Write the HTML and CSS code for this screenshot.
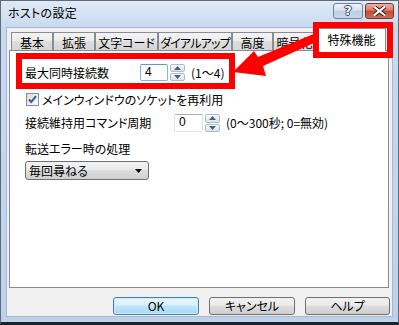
FILE: index.html
```html
<!DOCTYPE html>
<html lang="ja">
<head>
<meta charset="utf-8">
<title>ホストの設定</title>
<link rel="stylesheet" href="styles.css">
</head>
<body>
<div class="window">
  <div class="titlebar">
    <span class="title">ホストの設定</span>
    <div class="caption-btns">
      <div class="cbtn help"><span class="q">?</span></div>
      <div class="cbtn close">
        <svg width="13" height="10" viewBox="0 0 13 10"><path d="M1.5 1 L11.5 9 M11.5 1 L1.5 9" stroke="#3a1410" stroke-width="4" stroke-linecap="square"/><path d="M1.5 1 L11.5 9 M11.5 1 L1.5 9" stroke="#fff" stroke-width="2.2" stroke-linecap="square"/></svg>
      </div>
    </div>
  </div>
  <div class="client">
    <div class="tabs">
      <div class="tab w42">基本</div>
      <div class="tab w42">拡張</div>
      <div class="tab w63">文字コード</div>
      <div class="tab w74">ダイアルアップ</div>
      <div class="tab w41">高度</div>
      <div class="tab w43">暗号化</div>
      <div class="tab sel">特殊機能</div>
    </div>
    <div class="panel">
      <div class="row r1">
        <span class="lbl l1">最大同時接続数</span>
        <div class="edit e1 focus">4</div>
        <div class="spin">
          <div class="sb"><svg width="7" height="4" viewBox="0 0 7 4"><path d="M0 4 L3.5 0 L7 4Z" fill="#4c5f82"/></svg></div>
          <div class="sb"><svg width="7" height="4" viewBox="0 0 7 4"><path d="M0 0 L3.5 4 L7 0Z" fill="#4c5f82"/></svg></div>
        </div>
        <span class="hint">(1～4)</span>
      </div>
      <div class="row chk">
        <span class="box"><svg width="11" height="11" viewBox="0 0 11 11"><path d="M2 5.5 L4.3 8 L9 2.2" fill="none" stroke="#3d5a94" stroke-width="2"/></svg></span>
        <span class="chklbl">メインウィンドウのソケットを再利用</span>
      </div>
      <div class="row r3">
        <span class="lbl l3">接続維持用コマンド周期</span>
        <div class="edit e2">0</div>
        <div class="spin">
          <div class="sb"><svg width="7" height="4" viewBox="0 0 7 4"><path d="M0 4 L3.5 0 L7 4Z" fill="#4c5f82"/></svg></div>
          <div class="sb"><svg width="7" height="4" viewBox="0 0 7 4"><path d="M0 0 L3.5 4 L7 0Z" fill="#4c5f82"/></svg></div>
        </div>
        <span class="hint h3">(0～300秒; 0=無効)</span>
      </div>
      <div class="lbl4">転送エラー時の処理</div>
      <div class="combo">
        <span>毎回尋ねる</span>
        <svg width="7" height="4" viewBox="0 0 7 4"><path d="M0 0 L3.5 4 L7 0Z" fill="#000"/></svg>
      </div>
    </div>
    <div class="buttons">
      <div class="btn def">OK</div>
      <div class="btn">キャンセル</div>
      <div class="btn">ヘルプ</div>
    </div>
  </div>
  <svg class="annot" width="399" height="325" viewBox="0 0 399 325">
    <rect x="19" y="56" width="213" height="30" fill="none" stroke="#ff0000" stroke-width="6"/>
    <rect x="316" y="25" width="74" height="30" fill="none" stroke="#ff0000" stroke-width="6"/>
    <polygon points="233,72 254,51 258,57 316,33 316,42 263,66 266,76" fill="#ff0000"/>
  </svg>
</div>
</body>
</html>
```

FILE: styles.css
```css
* { box-sizing: border-box; }
html, body { margin: 0; padding: 0; }
body {
  width: 399px;
  height: 325px;
  overflow: hidden;
  font-family: "Noto Sans CJK JP", "Noto Sans", sans-serif;
  font-size: 12px;
  color: #000;
  font-feature-settings: "palt";
  background: #fff;
}
.window {
  position: relative;
  width: 399px;
  height: 325px;
  border: 1px solid #5d6b7c;
  border-bottom: 3px solid #1e2228;
  background: linear-gradient(to bottom, #e0eaf6 0, #c9daef 26px, #bdd2ea 100%);
  display: flex;
  flex-direction: column;
}
.titlebar {
  height: 26px;
  display: flex;
  align-items: flex-start;
  padding-left: 7px;
  padding-right: 4px;
}
.title {
  line-height: 16px;
  margin-top: 4px;
  font-size: 12px;
  letter-spacing: 0.3px;
}
.caption-btns {
  margin-left: auto;
  margin-top: 2px;
  display: flex;
  gap: 2px;
}
.cbtn {
  height: 16px;
  border-radius: 3px;
  display: flex;
  align-items: center;
  justify-content: center;
}
.help {
  width: 30px;
  border: 1px solid #6f849f;
  background: linear-gradient(to bottom, #eef3fa 0, #d6e2f0 45%, #bccfe6 50%, #c8d8ec 100%);
}
.q {
  font-family: "DejaVu Sans", sans-serif;
  font-weight: bold;
  font-size: 13px;
  line-height: 14px;
  color: #fff;
  text-shadow: -1px 0 #34455e, 1px 0 #34455e, 0 -1px #34455e, 0 1px #34455e;
}
.close {
  width: 29px;
  border: 1px solid #7d3329;
  background: linear-gradient(to bottom, #eab3a7 0, #d87a68 45%, #c54b36 50%, #d06a55 100%);
}
.client {
  flex: 1;
  margin: 0 5px 5px 5px;
  background: #f0f0f0;
  border: 1px solid #a6b9d1;
  display: flex;
  flex-direction: column;
}
.tabs {
  height: 22px;
  display: flex;
  align-items: flex-end;
  padding-left: 4px;
  position: relative;
  z-index: 2;
}
.tab {
  height: 18px;
  border: 1px solid #898c95;
  border-bottom: none;
  background: linear-gradient(to bottom, #f4f4f4 0, #ececec 45%, #dedede 50%, #d6d6d6 100%);
  text-align: center;
  line-height: 16px;
  padding-top: 2px;
  white-space: nowrap;
  overflow: hidden;
}
.w41 { width: 41px; }
.w42 { width: 42px; }
.w43 { width: 43px; }
.w63 { width: 63px; }
.w74 { width: 74px; letter-spacing: -0.8px; }
.tab.sel {
  width: 69px;
  height: 23px;
  margin-left: 1px;
  margin-bottom: -1px;
  background: #fff;
  padding-top: 3px;
}
.panel {
  height: 238px;
  margin: 0 3px 0 2px;
  background: #fff;
  border: 1px solid #898c95;
  padding-left: 15px;
  display: flex;
  flex-direction: column;
  align-items: flex-start;
}
.row {
  display: flex;
  align-items: center;
}
.r1 { margin-top: 13px; height: 17px; }
.lbl { line-height: 16px; white-space: nowrap; }
.l1 { width: 115px; }
.l3 { width: 149px; }
.edit {
  height: 17px;
  border: 1px solid #abadb3;
  border-color: #abadb3 #dbdfe6 #e3e9ef #e2e3ea;
  border-radius: 2px;
  padding-left: 4px;
  line-height: 15px;
  font-family: "Liberation Sans", sans-serif;
  font-size: 12px;
  background: #fff;
}
.e1 { width: 28px; }
.e2 { width: 29px; }
.edit.focus { border-color: #5b9bd5 #7eb4ea #7eb4ea #7eb4ea; }
.spin {
  margin-left: 2px;
  width: 15px;
  height: 17px;
  display: flex;
  flex-direction: column;
  gap: 1px;
}
.sb {
  flex: 1;
  border: 1px solid #b1bccb;
  border-radius: 2px;
  background: linear-gradient(to bottom, #f8f9fb, #dde3ea);
  display: flex;
  align-items: center;
  justify-content: center;
}
.hint {
  margin-left: 6px;
  line-height: 16px;
  white-space: nowrap;
}
.chk { margin-top: 12px; height: 13px; margin-left: 1px; }
.box {
  width: 13px;
  height: 13px;
  border: 1px solid #8e8f8f;
  background: linear-gradient(135deg, #dcdcdc, #fbfbfb);
  display: flex;
  align-items: center;
  justify-content: center;
}
.chklbl { margin-left: 3px; line-height: 14px; white-space: nowrap; }
.r3 { margin-top: 8px; height: 18px; }
.r3 .edit, .r3 .spin { height: 18px; }
.lbl4 { margin-top: 9px; line-height: 16px; }
.combo {
  margin-top: 4px;
  width: 124px;
  height: 19px;
  border: 1px solid #707070;
  border-radius: 3px;
  background: linear-gradient(to bottom, #f2f2f2 0, #ebebeb 45%, #dddddd 50%, #cfcfcf 100%);
  display: flex;
  align-items: center;
  padding-left: 3px;
  padding-right: 6px;
}
.combo span { line-height: 16px; }
.combo svg { margin-left: auto; }
.buttons {
  margin-top: 9px;
  height: 18px;
  display: flex;
  justify-content: flex-end;
  gap: 10px;
  padding-right: 2px;
}
.btn {
  width: 86px;
  height: 18px;
  border: 1px solid #707070;
  border-radius: 3px;
  background: linear-gradient(to bottom, #f2f2f2 0, #ebebeb 45%, #dddddd 50%, #cfcfcf 100%);
  text-align: center;
  line-height: 16px;
  white-space: nowrap;
}
.btn:last-child { width: 85px; }
.btn.def {
  border-color: #3c7fb1;
  background: linear-gradient(to bottom, #eaf6fd 0, #d9f0fc 45%, #bee6fd 50%, #a7d9f5 100%);
  box-shadow: inset 0 0 0 1px #cfeefd;
}
.annot {
  position: absolute;
  left: -1px;
  top: -1px;
  pointer-events: none;
  z-index: 10;
}
```
